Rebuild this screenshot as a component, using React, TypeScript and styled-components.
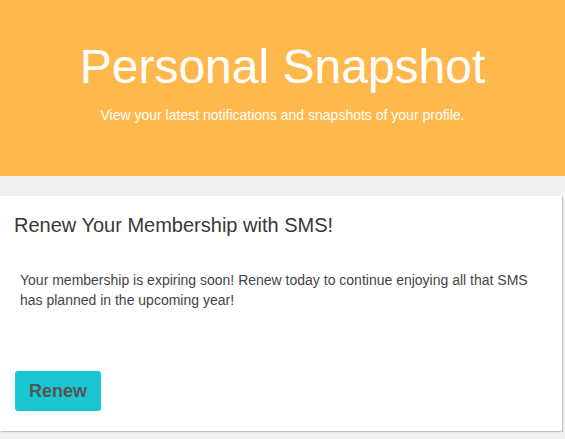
import styled, { createGlobalStyle } from "styled-components";

const GlobalStyle = createGlobalStyle`
  html, body {
    margin: 0;
    padding: 0;
    background: #eff0f2;
    font-family: "Liberation Sans", Arial, sans-serif;
  }
`;

const Page = styled.div`
  display: flex;
  flex-direction: column;
  min-height: 439px;
  background: #eff0f2;
`;

const Hero = styled.header`
  height: 176px;
  box-sizing: border-box;
  padding-top: 43px;
  background: #ffb84c;
  color: #fff;
  text-align: center;
`;

const HeroTitle = styled.h1`
  margin: 0;
  font-size: 48px;
  line-height: 48px;
  font-weight: 400;
`;

const HeroSubtitle = styled.p`
  margin: 14px 0 0;
  font-size: 14px;
  line-height: 20px;
`;

const Content = styled.main`
  padding: 20px 3px 0 0;
`;

const Card = styled.section`
  display: flex;
  flex-direction: column;
  align-items: flex-start;
  background: #fff;
  padding: 17px 15px 20px;
  box-shadow: 1px 1px 1px rgba(0, 0, 0, 0.18);
`;

const CardTitle = styled.h2`
  margin: 0 0 0 -1px;
  font-size: 20px;
  line-height: 24px;
  font-weight: 400;
  color: #383838;
`;

const CardText = styled.p`
  margin: 33px 0 0 5px;
  font-size: 14px;
  line-height: 20px;
  color: #444;
`;

const RenewButton = styled.button`
  margin-top: 61px;
  height: 40px;
  padding: 0 14px;
  border: 0;
  border-radius: 3px;
  background: #19c6d4;
  color: #555;
  font-family: inherit;
  font-size: 18px;
  font-weight: 700;
  cursor: pointer;
`;

export default function App() {
  return (
    <Page>
      <GlobalStyle />
      <Hero>
        <HeroTitle>Personal Snapshot</HeroTitle>
        <HeroSubtitle>View your latest notifications and snapshots of your profile.</HeroSubtitle>
      </Hero>
      <Content>
        <Card>
          <CardTitle>Renew Your Membership with SMS!</CardTitle>
          <CardText>
            Your membership is expiring soon! Renew today to continue enjoying all that SMS
            <br />
            has planned in the upcoming year!
          </CardText>
          <RenewButton>Renew</RenewButton>
        </Card>
      </Content>
    </Page>
  );
}
